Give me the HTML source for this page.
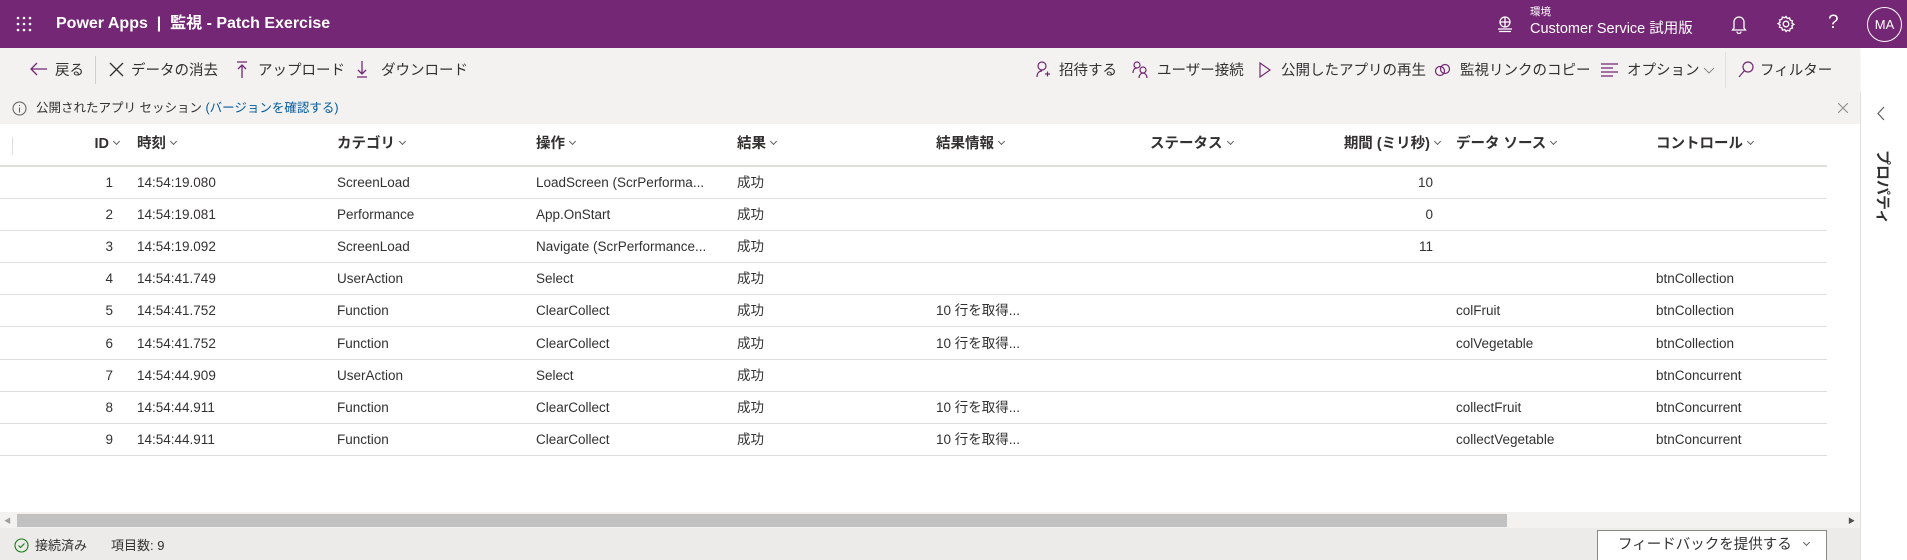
<!DOCTYPE html>
<html><head><meta charset="utf-8"><style>
*{box-sizing:border-box;margin:0;padding:0}
body{width:1907px;height:560px;overflow:hidden;background:#fff;font-family:"Segoe UI","Liberation Sans","Noto Sans CJK JP",sans-serif;color:#323130;position:relative}
.a{position:absolute;white-space:nowrap;line-height:18px}
.hdr{left:0;top:0;width:1907px;height:48px;background:#742774;color:#fff}
.tb{left:0;top:48px;width:1860px;height:44px;background:#f3f2f1;box-shadow:0 1px 2px rgba(0,0,0,.08)}
.ib{left:0;top:93px;width:1860px;height:31px;background:#f3f2f1}
.t{font-size:14.5px;top:62px;color:#323130}
.th{font-size:14.5px;font-weight:600;top:135px;color:#323130}
.cv{display:inline-block;width:5px;height:5px;border-right:1px solid #605e5c;border-bottom:1px solid #605e5c;transform:rotate(45deg);margin-left:5px;vertical-align:4px}
.td{font-size:13.5px;color:#323130}
.line{left:0;width:1827px;height:1px;background:#e1dfdd}
svg{position:absolute}
</style></head><body>
<div class="a hdr"></div>
<svg style="left:16px;top:16px" width="16" height="16" viewBox="0 0 16 16" fill="#fff"><circle cx="2" cy="2" r="1.3"/><circle cx="8" cy="2" r="1.3"/><circle cx="14" cy="2" r="1.3"/><circle cx="2" cy="8" r="1.3"/><circle cx="8" cy="8" r="1.3"/><circle cx="14" cy="8" r="1.3"/><circle cx="2" cy="14" r="1.3"/><circle cx="8" cy="14" r="1.3"/><circle cx="14" cy="14" r="1.3"/></svg>
<div class="a" style="left:56px;top:15px;color:#fff;font-size:16px;font-weight:700">Power Apps&nbsp; | &nbsp;監視 - Patch Exercise</div>
<svg style="left:1496px;top:15px" width="18" height="18" viewBox="0 0 18 18" fill="none" stroke="#fff" stroke-width="1.3"><circle cx="9" cy="7" r="5"/><path d="M4 7h10M9 2v10M2 14h14M3 16.5h12"/></svg>
<div class="a" style="left:1530px;top:3px;color:#fff;font-size:10.5px">環境</div>
<div class="a" style="left:1530px;top:20px;color:#fff;font-size:14.5px">Customer Service 試用版</div>
<svg style="left:1730px;top:14px" width="18" height="20" viewBox="0 0 18 20" fill="none" stroke="#fff" stroke-width="1.3"><path d="M4 14V8a5 5 0 0 1 10 0v6l1.5 2h-13z M7 17.5a2 2 0 0 0 4 0"/></svg>
<svg style="left:1777px;top:15px" width="18" height="18" viewBox="0 0 18 18" fill="none" stroke="#fff" stroke-width="1.3"><circle cx="9" cy="9" r="2.8"/><path d="M9 1.5l1.3 2 2.3-.6.6 2.3 2.3.6-.6 2.3 2 1.3-2 1.3.6 2.3-2.3.6-.6 2.3-2.3-.6L9 16.5l-1.3-2-2.3.6-.6-2.3-2.3-.6.6-2.3-2-1.3 2-1.3-.6-2.3 2.3-.6.6-2.3 2.3.6z"/></svg>
<div class="a" style="left:1828px;top:14px;color:#fff;font-size:19px;font-weight:300">?</div>
<div class="a" style="left:1867px;top:7px;width:35px;height:35px;border:1px solid #fff;border-radius:50%;color:#fff;font-size:13px;text-align:center;line-height:33px">MA</div>

<div class="a tb"></div>
<svg style="left:30px;top:62px" width="18" height="14" viewBox="0 0 18 14" fill="none" stroke="#742774" stroke-width="1.3"><path d="M17 7H2M7 1L1 7l6 6"/></svg>
<div class="a t" style="left:55px">戻る</div>
<div class="a" style="left:95px;top:56px;width:1px;height:28px;background:#d2d0ce"></div>
<svg style="left:109px;top:62px" width="15" height="15" viewBox="0 0 15 15" stroke="#323130" stroke-width="1.3"><path d="M1 1l13 13M14 1L1 14"/></svg>
<div class="a t" style="left:131px">データの消去</div>
<svg style="left:236px;top:61px" width="12" height="17" viewBox="0 0 12 17" fill="none" stroke="#742774" stroke-width="1.3"><path d="M1 1h10M6 17V4M2 8l4-4 4 4"/></svg>
<div class="a t" style="left:258px">アップロード</div>
<svg style="left:356px;top:61px" width="12" height="17" viewBox="0 0 12 17" fill="none" stroke="#742774" stroke-width="1.3"><path d="M1 16h10M6 0v13M2 9l4 4 4-4"/></svg>
<div class="a t" style="left:381px">ダウンロード</div>

<svg style="left:1036px;top:61px" width="14" height="17" viewBox="0 0 14 17" fill="none" stroke="#742774" stroke-width="1.2"><circle cx="6" cy="5" r="4"/><path d="M1 16c0-4 2-6 5-6M9 13h5M11.5 10.5v5"/></svg>
<div class="a t" style="left:1059px">招待する</div>
<svg style="left:1132px;top:61px" width="17" height="17" viewBox="0 0 17 17" fill="none" stroke="#742774" stroke-width="1.2"><circle cx="5" cy="4" r="3"/><circle cx="11" cy="9" r="3"/><path d="M1 12c0-3 1.5-5 4-5M7 17c0-3 2-5 4-5s4 2 4 5"/></svg>
<div class="a t" style="left:1157px">ユーザー接続</div>
<svg style="left:1259px;top:62px" width="12" height="16" viewBox="0 0 12 16" fill="none" stroke="#742774" stroke-width="1.2"><path d="M1 1l10 7-10 7z"/></svg>
<div class="a t" style="left:1281px">公開したアプリの再生</div>
<svg style="left:1434px;top:63px" width="18" height="14" viewBox="0 0 18 14" fill="none" stroke="#742774" stroke-width="1.2"><circle cx="6" cy="8" r="4.5"/><circle cx="11" cy="6" r="4.5"/></svg>
<div class="a t" style="left:1460px">監視リンクのコピー</div>
<svg style="left:1601px;top:63px" width="17" height="14" viewBox="0 0 17 14" stroke="#742774" stroke-width="1.2"><path d="M0 1h17M0 5h12M0 9h17M0 13h12"/></svg>
<div class="a t" style="left:1627px">オプション</div>
<svg style="left:1703px;top:67px" width="12" height="7" viewBox="0 0 12 7" fill="none" stroke="#8a8886" stroke-width="1"><path d="M1 1l5 5 5-5"/></svg>
<div class="a" style="left:1725px;top:52px;width:1px;height:36px;background:#e1dfdd"></div>
<svg style="left:1738px;top:61px" width="16" height="17" viewBox="0 0 16 17" fill="none" stroke="#742774" stroke-width="1.2"><circle cx="10" cy="6" r="5"/><path d="M6.5 9.5L1 16"/></svg>
<div class="a t" style="left:1760px">フィルター</div>

<div class="a ib"></div>
<svg style="left:12px;top:101px" width="15" height="15" viewBox="0 0 15 15" fill="none" stroke="#605e5c" stroke-width="1"><circle cx="7.5" cy="7.5" r="6.5"/><path d="M7.5 6.5v5M7.5 4v1"/></svg>
<div class="a" style="left:36px;top:99px;font-size:12.5px;color:#323130">公開されたアプリ セッション <span style="color:#005a9e">(バージョンを確認する)</span></div>
<svg style="left:1838px;top:103px" width="10" height="10" viewBox="0 0 10 10" stroke="#8a8886" stroke-width="1"><path d="M0 0l10 10M10 0L0 10"/></svg>

<div class="a" style="left:1860px;top:92px;width:47px;height:468px;background:#fff;border-left:1px solid #e1dfdd"></div>
<svg style="left:1877px;top:106px" width="8" height="15" viewBox="0 0 8 15" fill="none" stroke="#605e5c" stroke-width="1.2"><path d="M7 1L1 7.5 7 14"/></svg>
<div class="a" style="left:1873px;top:150px;writing-mode:vertical-rl;text-orientation:sideways;font-size:15px;font-weight:600;color:#323130">プロパティ</div>

<div class="a" style="left:12px;top:137px;width:1px;height:18px;background:#e1dfdd"></div>
<div class="a th" style="left:74px;width:45px;text-align:right">ID<i class="cv"></i></div>
<div class="a th" style="left:137px">時刻<i class="cv"></i></div>
<div class="a th" style="left:337px">カテゴリ<i class="cv"></i></div>
<div class="a th" style="left:536px">操作<i class="cv"></i></div>
<div class="a th" style="left:737px">結果<i class="cv"></i></div>
<div class="a th" style="left:936px">結果情報<i class="cv"></i></div>
<div class="a th" style="left:1150px">ステータス<i class="cv"></i></div>
<div class="a th" style="left:1290px;width:150px;text-align:right">期間 (ミリ秒)<i class="cv"></i></div>
<div class="a th" style="left:1456px">データ ソース<i class="cv"></i></div>
<div class="a th" style="left:1656px">コントロール<i class="cv"></i></div>
<div class="a line" style="top:165px;height:2px"></div>

<div id="rows"></div>
<script>
var d=[["1","14:54:19.080","ScreenLoad","LoadScreen (ScrPerforma...","成功","","10","",""],
["2","14:54:19.081","Performance","App.OnStart","成功","","0","",""],
["3","14:54:19.092","ScreenLoad","Navigate (ScrPerformance...","成功","","11","",""],
["4","14:54:41.749","UserAction","Select","成功","","","","btnCollection"],
["5","14:54:41.752","Function","ClearCollect","成功","10 行を取得...","","colFruit","btnCollection"],
["6","14:54:41.752","Function","ClearCollect","成功","10 行を取得...","","colVegetable","btnCollection"],
["7","14:54:44.909","UserAction","Select","成功","","","","btnConcurrent"],
["8","14:54:44.911","Function","ClearCollect","成功","10 行を取得...","","collectFruit","btnConcurrent"],
["9","14:54:44.911","Function","ClearCollect","成功","10 行を取得...","","collectVegetable","btnConcurrent"]];
var h="";
d.forEach(function(r,i){var y=174+i*32.1;
h+='<div class="a td" style="left:80px;width:33px;text-align:right;top:'+y+'px">'+r[0]+'</div>';
var xs=[137,337,536,737,936];for(var k=0;k<5;k++)h+='<div class="a td" style="left:'+xs[k]+'px;top:'+y+'px">'+r[k+1]+'</div>';
h+='<div class="a td" style="left:1333px;width:100px;text-align:right;top:'+y+'px">'+r[6]+'</div>';
h+='<div class="a td" style="left:1456px;top:'+y+'px">'+r[7]+'</div>';
h+='<div class="a td" style="left:1656px;top:'+y+'px">'+r[8]+'</div>';
h+='<div class="a line" style="top:'+(y+24)+'px"></div>';});
document.getElementById("rows").innerHTML=h;
</script>

<div class="a" style="left:0;top:512px;width:1860px;height:16px;background:#f3f2f1"></div>
<div class="a" style="left:17px;top:514px;width:1490px;height:13px;background:#c1c1c1"></div>
<div class="a" style="left:4px;top:513px;font-size:7px;color:#a0a0a0">◀</div>
<div class="a" style="left:1848px;top:513px;font-size:7px;color:#505050">▶</div>

<div class="a" style="left:0;top:528px;width:1860px;height:32px;background:#edebe9"></div>
<svg style="left:14px;top:538px" width="15" height="15" viewBox="0 0 15 15" fill="none" stroke="#107c10" stroke-width="1.1"><circle cx="7.5" cy="7.5" r="6.5"/><path d="M4.5 7.5l2 2 4-4"/></svg>
<div class="a" style="left:35px;top:537px;font-size:13px">接続済み</div>
<div class="a" style="left:111px;top:537px;font-size:13px">項目数: 9</div>
<div class="a" style="left:1597px;top:530px;width:230px;height:30px;background:#fff;border:1px solid #8a8886;border-bottom:none;font-size:14.5px;line-height:28px;padding-left:20px">フィードバックを提供する<i class="cv" style="margin-left:12px"></i></div>
</body></html>
